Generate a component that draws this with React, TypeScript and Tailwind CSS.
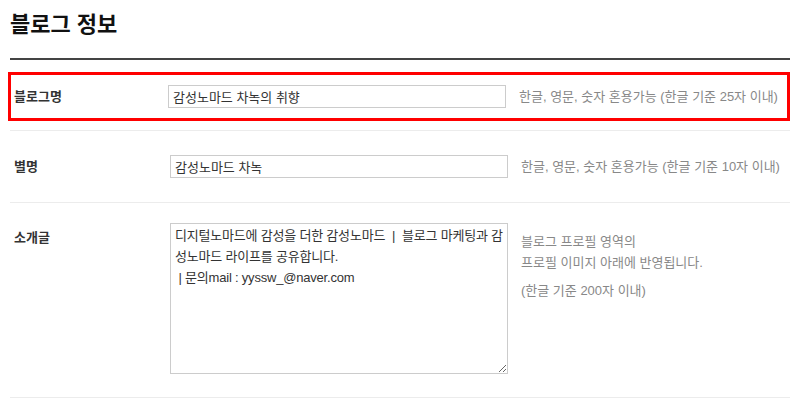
import React from 'react';

const font = { fontFamily: '"Liberation Sans", "Noto Sans CJK KR", sans-serif' };

export default function BlogInfo() {
  return (
    <div className="min-h-screen bg-white text-[#333] px-[10px]" style={font}>
      {/* title */}
      <h2 className="pt-[9px] pb-[17px] text-[22px] font-bold leading-[32px] text-[#111]">블로그 정보</h2>
      <div className="h-[2px] bg-[#444]" />

      {/* 블로그명 (highlighted) */}
      <div className="pt-[12px] pb-[9px] border-b border-[#ececec]">
        <div className="-ml-[2px] h-[49px] border-[3px] border-[#ff0000] flex items-center">
          <div className="w-[157px] pl-[3px] text-[13px] font-bold">블로그명</div>
          <input
            readOnly
            value="감성노마드 차녹의 취향"
            className="w-[338px] h-[23px] border border-[#ccc] px-[4px] text-[13px] text-[#333] outline-none"
            style={font}
          />
          <div className="ml-[13px] text-[13px] text-[#888]">한글, 영문, 숫자 혼용가능 (한글 기준 25자 이내)</div>
        </div>
      </div>

      {/* 별명 */}
      <div className="h-[72px] flex items-center border-b border-[#ececec]">
        <div className="w-[160px] pl-[4px] text-[13px] font-bold">별명</div>
        <input
          readOnly
          value="감성노마드 차녹"
          className="w-[338px] h-[23px] border border-[#ccc] px-[4px] text-[13px] text-[#333] outline-none"
          style={font}
        />
        <div className="ml-[13px] text-[13px] text-[#888]">한글, 영문, 숫자 혼용가능 (한글 기준 10자 이내)</div>
      </div>

      {/* 소개글 */}
      <div className="flex items-start pt-[20px] pb-[23px] border-b border-[#ececec]">
        <div className="w-[160px] pl-[4px] pt-[5px] text-[13px] font-bold">소개글</div>
        <textarea
          readOnly
          value={'디지털노마드에 감성을 더한 감성노마드  |  블로그 마케팅과 감성노마드 라이프를 공유합니다.\n | 문의mail : yyssw_@naver.com'}
          className="w-[338px] h-[151px] border border-[#ccc] px-[4px] py-[1px] text-[13px] leading-[21px] text-[#333] outline-none resize-y tracking-[-0.2px]"
          style={font}
        />
        <div className="ml-[13px] pt-[8px] text-[13px] text-[#888] leading-[21px]">
          <p>블로그 프로필 영역의</p>
          <p>프로필 이미지 아래에 반영됩니다.</p>
          <p className="mt-[7px]">(한글 기준 200자 이내)</p>
        </div>
      </div>
    </div>
  );
}
